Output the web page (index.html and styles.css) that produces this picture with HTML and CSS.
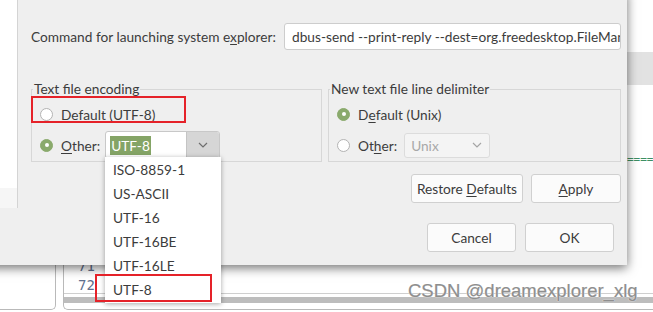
FILE: index.html
```html
<!DOCTYPE html>
<html lang="en">
<head>
  <meta charset="UTF-8">
  <title>Preferences — Text file encoding</title>
  <link rel="stylesheet" href="styles.css">
</head>
<body>
  <div class="screen">
    <!-- editor window behind the dialog -->
    <div class="desk">
      <div class="desk-band"></div>
      <div class="desk-rule">=====</div>
      <div class="desk-bottom">
        <div class="side-pane"></div>
        <div class="code-pane">
          <div class="code-lines">
            <div class="line"><span class="ln">71</span></div>
            <div class="line"><span class="ln">72</span></div>
            <div class="line"><span class="ln">73</span><span class="cm">/* encoding: UTF-8 */</span></div>
          </div>
          <div class="hscroll"><div class="hscroll-bar"></div></div>
        </div>
      </div>
    </div>

    <!-- preferences dialog -->
    <div class="dialog">
      <div class="dlg-main">
        <div class="tree"><div class="tree-scroll"></div></div>
        <div class="page">
          <div class="cmd-row">
            <span class="cmd-label">Command for launching system e<u>x</u>plorer:</span>
            <div class="field">dbus-send --print-reply --dest=org.freedesktop.FileManager1 /org/freedesktop/FileManager1</div>
          </div>
          <div class="groups">
            <div class="group">
              <div class="group-title">Text file encoding</div>
              <div class="opt"><span class="radio"></span>Defa<u>u</u>lt (UTF-8)</div>
              <div class="opt">
                <span class="radio on"></span><u>O</u>ther:
                <div class="combo">
                  <span class="combo-text"><span class="sel">UTF-8</span></span>
                  <span class="combo-btn"><svg width="10" height="6" viewBox="0 0 10 6"><path d="M1 1l4 4 4-4" fill="none" stroke="#6e6e6e" stroke-width="1.2"/></svg></span>
                </div>
              </div>
            </div>
            <div class="group">
              <div class="group-title">New text file line delimiter</div>
              <div class="opt"><span class="radio on"></span>D<u>e</u>fault (Unix)</div>
              <div class="opt">
                <span class="radio"></span>Ot<u>h</u>er:
                <div class="combo combo-off">
                  <span class="combo-text">Unix</span>
                  <span class="combo-btn"><svg width="10" height="6" viewBox="0 0 10 6"><path d="M1 1l4 4 4-4" fill="none" stroke="#a5a5a5" stroke-width="1.2"/></svg></span>
                </div>
              </div>
            </div>
          </div>
          <div class="btn-row">
            <button class="btn btn-restore">Restore <u>D</u>efaults</button>
            <button class="btn btn-apply"><u>A</u>pply</button>
          </div>
        </div>
      </div>
      <div class="dlg-foot">
        <button class="btn">Cancel</button>
        <button class="btn">OK</button>
      </div>
    </div>

    <!-- open encoding list -->
    <ul class="popup">
      <li>ISO-8859-1</li>
      <li>US-ASCII</li>
      <li>UTF-16</li>
      <li>UTF-16BE</li>
      <li>UTF-16LE</li>
      <li>UTF-8</li>
    </ul>

    <div class="mark mark-default"></div>
    <div class="mark mark-utf8"></div>
    <div class="watermark">CSDN @dreamexplorer_xlg</div>
  </div>
</body>
</html>
```

FILE: styles.css
```css
body {
  margin: 0;
  background: #fff;
  font-family: Lato, 'Noto Sans', sans-serif;
  font-size: 13.7px;
  color: #3c3c3c;
}
u {
  text-underline-offset: 2px;
}
.screen {
  position: relative;
  width: 653px;
  height: 312px;
  overflow: hidden;
}

/* background editor */
.desk {
  position: absolute;
  inset: 0;
  background: #fff;
}
.desk-band {
  margin-top: 52px;
  height: 33px;
  background: #e2e2e2;
}
.desk-rule {
  margin: 71px 0 0 627px;
  height: 8px;
  font-family: 'DejaVu Sans Mono', monospace;
  font-size: 11px;
  line-height: 8px;
  color: #3d8f63;
  letter-spacing: 0;
}
.desk-bottom {
  display: flex;
  gap: 7px;
  height: 60px;
  margin-top: 86px;
}
.side-pane {
  width: 55px;
  border-right: 1px solid #b9b9b9;
  border-bottom: 1px solid #b9b9b9;
  border-bottom-right-radius: 5px;
}
.code-pane {
  flex: 1;
  display: flex;
  flex-direction: column;
  border-left: 1px solid #b9b9b9;
  border-bottom: 1px solid #b9b9b9;
  border-bottom-left-radius: 5px;
}
.code-lines {
  flex: 1;
  padding: 7px 0 0 14px;
  overflow: hidden;
  font-family: 'DejaVu Sans Mono', monospace;
  font-size: 14px;
  line-height: 19px;
}
.ln {
  color: #60708e;
  margin-right: 120px;
}
.cm {
  color: #2f8f8f;
}
.hscroll {
  height: 12px;
  border-top: 1px solid #cfcfcf;
  padding-top: 3px;
}
.hscroll-bar {
  height: 6px;
  background: #bdbdbd;
}

/* dialog */
.dialog {
  position: absolute;
  left: -20px;
  top: -10px;
  width: 647px;
  height: 275px;
  display: flex;
  flex-direction: column;
  background: #efefef;
  box-shadow: 0 3px 10px rgba(0,0,0,0.55);
}
.dlg-main {
  display: flex;
  height: 218px;
}
.tree {
  width: 37px;
  background: #fff;
  border-right: 1px solid #d4d4d4;
  display: flex;
  flex-direction: column;
  justify-content: flex-end;
}
.tree-scroll {
  height: 20px;
  background: #f6f6f6;
}
.page {
  flex: 1;
  padding: 33px 6px 0 13px;
}
.cmd-row {
  display: flex;
  align-items: center;
  justify-content: space-between;
  height: 27px;
}
.field {
  width: 328px;
  height: 25px;
  line-height: 25px;
  padding-left: 7px;
  background: #fff;
  border: 1px solid #cdcdcd;
  border-radius: 3px;
  white-space: nowrap;
  overflow: hidden;
}
.groups {
  display: flex;
  gap: 6px;
  margin-top: 39px;
}
.group {
  border: 1px solid #d7d7d7;
  height: 71px;
  padding: 0 8px;
}
.group:first-child {
  width: 273px;
}
.group:last-child {
  flex: 1;
}
.group-title {
  display: table;
  margin: -9px 0 0 -7px;
  padding: 0 1px;
  line-height: 16px;
  background: #efefef;
}
.opt {
  display: flex;
  align-items: center;
  height: 30px;
  margin-top: 2px;
}
.opt + .opt {
  margin-top: 1px;
}
.radio {
  width: 11px;
  height: 11px;
  border: 1px solid #b3b3b3;
  border-radius: 50%;
  background: #fff;
  margin-right: 8px;
  display: flex;
  align-items: center;
  justify-content: center;
}
.radio.on {
  background: #8aaa6c;
  border-color: #8aaa6c;
}
.radio.on::after {
  content: "";
  width: 4px;
  height: 4px;
  border-radius: 50%;
  background: #fff;
}
.combo {
  display: flex;
  margin-left: 5px;
  width: 113px;
  height: 26px;
  border: 1px solid #c8c8c8;
  border-radius: 3px;
  background: #fff;
  overflow: hidden;
}
.combo-text {
  flex: 1;
  display: flex;
  align-items: center;
  padding-left: 4px;
}
.sel {
  background: #84a466;
  color: #fff;
  padding: 1px 1px;
}
.combo-btn {
  width: 32px;
  display: flex;
  align-items: center;
  justify-content: center;
  background: #d6d6d6;
  border-left: 1px solid #c4c4c4;
}
.combo-off {
  width: 84px;
  height: 23px;
  margin-left: 7px;
  background: #f4f4f4;
  border-color: #dcdcdc;
  color: #a8a8a8;
}
.combo-off .combo-text {
  padding-left: 6px;
}
.combo-off .combo-btn {
  width: 24px;
  background: transparent;
  border: none;
}
.btn-row {
  display: flex;
  justify-content: flex-end;
  gap: 8px;
  margin-top: 12px;
}
.btn {
  height: 29px;
  padding: 0;
  font: inherit;
  color: #3c3c3c;
  background: #fbfbfb;
  border: 1px solid #d0d0d0;
  border-radius: 3px;
}
.btn-restore {
  width: 112px;
}
.btn-apply {
  width: 90px;
}
.dlg-foot {
  flex: 1;
  display: flex;
  justify-content: flex-end;
  gap: 9px;
  padding: 15px 13px 0 0;
}
.dlg-foot .btn {
  width: 89px;
}

/* dropdown */
.popup {
  position: absolute;
  left: 105px;
  top: 157px;
  width: 116px;
  margin: 0;
  padding: 1px 0;
  list-style: none;
  background: #fff;
  box-shadow: 0 1px 5px rgba(0,0,0,0.35);
}
.popup li {
  height: 24px;
  line-height: 24px;
  padding-left: 8px;
}

/* annotations */
.mark {
  position: absolute;
  border: 2px solid #e52229;
}
.mark-default {
  left: 31px;
  top: 96px;
  width: 151px;
  height: 23px;
}
.mark-utf8 {
  left: 95px;
  top: 274px;
  width: 113px;
  height: 24px;
}
.watermark {
  position: absolute;
  left: 408px;
  top: 280px;
  font-family: 'Liberation Sans', Arial, sans-serif;
  font-size: 18.5px;
  color: #8e8e8e;
  -webkit-text-stroke: 0.2px #8e8e8e;
  text-shadow: 0 0 1px #fff, 0 0 1px #fff;
}
```
